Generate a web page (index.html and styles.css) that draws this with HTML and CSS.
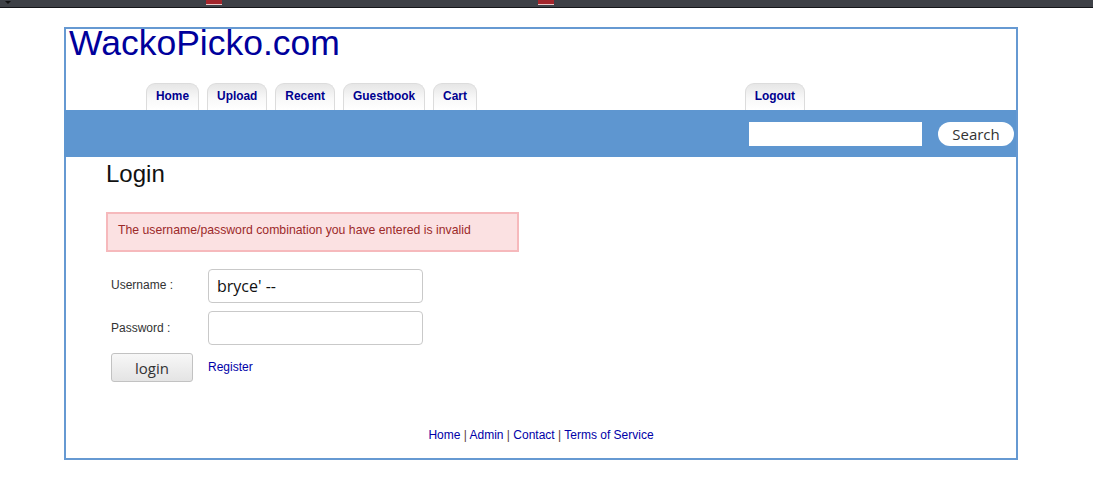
FILE: index.html
```html
<!DOCTYPE html>
<html>
<head>
<meta charset="utf-8">
<title>WackoPicko.com</title>
<link rel="stylesheet" href="styles.css">
</head>
<body>
<div class="chrome">
  <span class="chrome-caret"></span>
  <span class="chrome-fav fav-a"></span>
  <span class="chrome-fav fav-b"></span>
</div>
<div class="page">
  <h1 class="site-title">WackoPicko.com</h1>
  <ul class="nav">
    <li class="tab"><a href="#">Home</a></li>
    <li class="tab"><a href="#">Upload</a></li>
    <li class="tab"><a href="#">Recent</a></li>
    <li class="tab"><a href="#">Guestbook</a></li>
    <li class="tab"><a href="#">Cart</a></li>
    <li class="tab tab-logout"><a href="#">Logout</a></li>
  </ul>
  <div class="searchbar">
    <input class="search-input" type="text">
    <button class="search-btn" type="button">Search</button>
  </div>
  <div class="main">
    <h2 class="heading">Login</h2>
    <div class="error">The username/password combination you have entered is invalid</div>
    <form class="login-form">
      <label class="label">Username :</label>
      <input class="field" type="text" value="bryce' --">
      <label class="label label-pw">Password :</label>
      <input class="field" type="password">
      <button class="login-btn" type="button">login</button>
      <a class="register" href="#">Register</a>
    </form>
  </div>
  <div class="footer">
    <a href="#">Home</a> | <a href="#">Admin</a> | <a href="#">Contact</a> | <a href="#">Terms of Service</a>
  </div>
</div>
</body>
</html>
```
FILE: styles.css
```css
html, body {
  margin: 0;
  padding: 0;
  background: #fff;
}
body {
  font-family: "Liberation Sans", Arial, sans-serif;
  font-size: 12px;
  color: #222;
}
.chrome {
  height: 7px;
  background: #3e4147;
  border-bottom: 1px solid #15161a;
  display: flex;
  align-items: flex-start;
  overflow: hidden;
}
.chrome-caret {
  display: block;
  width: 0;
  height: 0;
  margin: 1px 0 0 5px;
  border-left: 3px solid transparent;
  border-right: 3px solid transparent;
  border-top: 3px solid #111;
}
.chrome-fav {
  display: block;
  width: 16px;
  height: 4px;
  background: #a3262c;
  border-bottom: 1px solid #e8c8c8;
}
.fav-a { margin-left: 195px; }
.fav-b { margin-left: 316px; }

.page {
  width: 950px;
  margin: 19px 0 0 64px;
  border: 2px solid #6699d2;
  display: flex;
  flex-direction: column;
}
.site-title {
  margin: 0;
  padding: 1px 0 0 3px;
  font-size: 35.5px;
  font-weight: normal;
  line-height: 26px;
  color: #00009c;
}
.nav {
  list-style: none;
  margin: 27px 0 0 0;
  padding: 0 211px 0 80px;
  display: flex;
  gap: 8px;
}
.tab {
  border: 1px solid #dcdcdc;
  border-bottom: none;
  border-radius: 9px 9px 0 0;
  background: linear-gradient(#e6e6e6, #f8f8f8 55%, #ffffff);
  padding: 5px 9px 7px;
  line-height: 14px;
  font-size: 11.9px;
}
.tab a {
  color: #00008f;
  font-weight: bold;
  text-decoration: none;
}
.tab-logout {
  margin-left: auto;
}
.searchbar {
  margin-left: -2px;
  height: 47px;
  background: #5e96d0;
  display: flex;
  justify-content: flex-end;
  align-items: flex-start;
  gap: 16px;
  padding: 12px 2px 0 0;
  box-sizing: border-box;
}
.search-input {
  width: 173px;
  height: 24px;
  box-sizing: border-box;
  border: none;
  margin: 0;
  padding: 0 4px;
  background: #fff;
}
.search-btn {
  width: 76px;
  height: 24px;
  margin: 0;
  padding: 0;
  border: none;
  border-radius: 12px;
  background: #fff;
  color: #333;
  font-family: "Open Sans", sans-serif;
  font-size: 15px;
  line-height: 22px;
}
.main {
  padding: 0 40px;
  display: flex;
  flex-direction: column;
  align-items: flex-start;
}
.heading {
  margin: 3px 0 0 0;
  font-size: 24px;
  font-weight: normal;
  line-height: 28px;
  color: #111;
}
.error {
  margin-top: 24px;
  width: 413px;
  box-sizing: border-box;
  border: 2px solid #f6b9bc;
  background: #fbe1e2;
  color: #9c2a2a;
  padding: 9px 10px 13px;
  line-height: 14px;
  font-size: 12.25px;
}
.login-form {
  margin: 17px 0 0 5px;
  display: grid;
  grid-template-columns: 97px 215px;
  row-gap: 8px;
  align-items: center;
}
.label {
  color: #333;
  padding-bottom: 3px;
}
.label-pw {
  padding-bottom: 0;
}
.field {
  width: 215px;
  height: 34px;
  box-sizing: border-box;
  margin: 0;
  border: 1px solid #c9c9c9;
  border-radius: 4px;
  padding: 0 8px;
  font-family: "Open Sans", sans-serif;
  font-size: 16px;
  color: #111;
  background: #fff;
}
.login-btn {
  width: 82px;
  height: 29px;
  margin: 0;
  padding: 0;
  border: 1px solid #c2c2c2;
  border-radius: 3px;
  background: linear-gradient(#f7f7f7, #e4e4e4);
  color: #333;
  font-family: "Open Sans", sans-serif;
  font-size: 15px;
  line-height: 26px;
}
.register {
  color: #0000a8;
  text-decoration: none;
  padding-bottom: 2px;
}
.footer {
  margin-top: 46px;
  padding-bottom: 16px;
  text-align: center;
  line-height: 14px;
  color: #5a3b3b;
}
.footer a {
  color: #0000a8;
  text-decoration: none;
}
```
